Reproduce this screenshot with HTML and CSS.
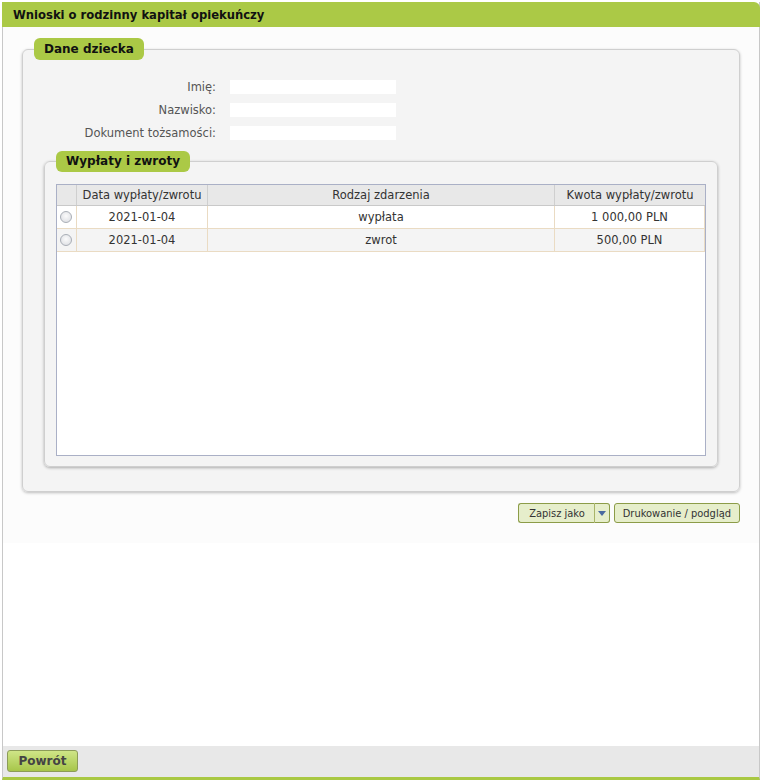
FILE: index.html
```html
<!DOCTYPE html>
<html lang="pl">
  <head>
    <meta charset="UTF-8" />
    <meta name="viewport" content="width=device-width, initial-scale=1.0" />
    <title>Wnioski o rodzinny kapitał opiekuńczy</title>
    <link rel="stylesheet" href="styles.css">
  </head>
  <body>
    <div class="page">
      <div class="page-header">Wnioski o rodzinny kapitał opiekuńczy</div>

      <div class="page-content">
        <fieldset class="group">
          <legend>Dane dziecka</legend>
          <div class="form-grid">
            <label>Imię:</label>
            <div class="field"></div>
            <label>Nazwisko:</label>
            <div class="field"></div>
            <label>Dokument tożsamości:</label>
            <div class="field"></div>
          </div>

          <fieldset class="group inner">
            <legend>Wypłaty i zwroty</legend>
            <div class="grid-table">
              <div class="row head">
                <div class="cell sel"></div>
                <div class="cell">Data wypłaty/zwrotu</div>
                <div class="cell">Rodzaj zdarzenia</div>
                <div class="cell">Kwota wypłaty/zwrotu</div>
              </div>
              <div class="row">
                <div class="cell sel"><input type="radio" name="pick" /></div>
                <div class="cell">2021-01-04</div>
                <div class="cell">wypłata</div>
                <div class="cell">1 000,00 PLN</div>
              </div>
              <div class="row alt">
                <div class="cell sel"><input type="radio" name="pick" /></div>
                <div class="cell">2021-01-04</div>
                <div class="cell">zwrot</div>
                <div class="cell">500,00 PLN</div>
              </div>
            </div>
          </fieldset>
        </fieldset>

        <div class="actions">
          <div class="split-btn">
            <button class="btn main">Zapisz jako</button>
            <button class="btn arrow"><span></span></button>
          </div>
          <button class="btn">Drukowanie / podgląd</button>
        </div>
      </div>

      <div class="page-spacer"></div>

      <div class="page-footer">
        <button class="back-btn">Powrót</button>
      </div>
    </div>
  </body>
</html>
```

FILE: styles.css
```css
body {
  margin: 0;
  font-family: Tahoma, "DejaVu Sans", sans-serif;
  font-size: 11.5px;
  color: #333;
  background: #fff;
}
.page {
  margin: 2px 2px 0;
  height: 775px;
  display: flex;
  flex-direction: column;
  border-left: 1px solid #c8c8c8;
  border-right: 1px solid #c8c8c8;
  border-bottom: 3px solid #a9c843;
}
.page-header {
  margin: 0 -1px;
  height: 25px;
  line-height: 26px;
  padding-left: 11px;
  background: #abc946;
  border-top-right-radius: 6px;
  font-weight: bold;
  font-size: 11.6px;
  color: #111;
}
.page-content {
  background: #fcfcfc;
  padding: 11px 19px 20px;
}
.group {
  margin: 0;
  padding: 0 11px 24px;
  min-width: 0;
  background: #f4f4f4;
  border: 1px solid #cfcfcf;
  border-radius: 6px;
  box-shadow: 0 1px 3px rgba(0, 0, 0, 0.25);
}
.group legend {
  padding: 0 10px;
  height: 22px;
  line-height: 22px;
  background: #abc946;
  border-radius: 6px;
  font-weight: bold;
  font-size: 12px;
  color: #111;
}
.form-grid {
  display: grid;
  grid-template-columns: 182px 166px;
  column-gap: 14px;
  row-gap: 9px;
  align-items: center;
  padding-top: 20px;
  margin-bottom: 11px;
}
.form-grid label {
  text-align: right;
  color: #555;
}
.field {
  height: 14px;
  background: #fff;
}
.group.inner {
  margin: 0 10px;
  padding-bottom: 10px;
  box-shadow: 0 1px 3px rgba(0, 0, 0, 0.3);
}
.group.inner legend {
  height: 21px;
  line-height: 21px;
}
.grid-table {
  margin-top: 12px;
  height: 270px;
  background: #fff;
  border: 1px solid #aab0c6;
}
.row {
  display: grid;
  grid-template-columns: 19px 131px 347px 1fr;
  height: 22px;
  border-bottom: 1px solid #eadbc3;
  border-right: 1px solid #eadbc3;
}
.row.head {
  height: 20px;
  background: #e8e8e8;
  border-bottom: 1px solid #c9c9c9;
  border-right: 0;
  color: #333;
}
.row.alt {
  background: #f4f4f4;
}
.cell {
  display: flex;
  align-items: center;
  justify-content: center;
  border-left: 1px solid #eadbc3;
}
.cell:first-child {
  border-left: 0;
}
.head .cell {
  border-left-color: #cfcfcf;
}
.cell.sel {
  justify-content: flex-start;
  padding-left: 3px;
}
.cell input {
  appearance: none;
  margin: 0;
  width: 12px;
  height: 12px;
  border-radius: 50%;
  border: 1px solid #a9aeb6;
  background: radial-gradient(circle at 50% 40%, #fbfbfb, #d9dbe0);
}
.actions {
  display: flex;
  justify-content: flex-end;
  gap: 4px;
  margin-top: 11px;
}
.split-btn {
  display: flex;
}
.btn {
  height: 20px;
  padding: 0 8px;
  font-family: "DejaVu Sans Condensed", "Liberation Sans Narrow", "DejaVu Sans", sans-serif;
  font-size: 11px;
  color: #333;
  background: #e6eecb;
  border: 1px solid #8c9c48;
  border-radius: 3px;
  cursor: pointer;
}
.btn.main {
  border-top-right-radius: 0;
  border-bottom-right-radius: 0;
  border-right: 0;
  padding: 0 9px 0 10px;
}
.btn.arrow {
  width: 16px;
  padding: 0;
  display: grid;
  place-content: center;
  border-top-left-radius: 0;
  border-bottom-left-radius: 0;
  border-left-color: #a8b468;
}
.btn.arrow span {
  width: 0;
  height: 0;
  border-left: 4px solid transparent;
  border-right: 4px solid transparent;
  border-top: 5px solid #4a6aa0;
}
.page-spacer {
  flex: 1;
  background: #fff;
}
.page-footer {
  height: 31px;
  background: #e8e8e8;
  padding: 4px 0 0 4px;
  box-sizing: border-box;
}
.back-btn {
  width: 71px;
  height: 22px;
  font-family: Tahoma, "DejaVu Sans", sans-serif;
  font-weight: bold;
  font-size: 12px;
  color: #444;
  background: linear-gradient(#cfe587, #a7c64a);
  border: 1px solid #8c9c58;
  border-radius: 3px;
  cursor: pointer;
}
```
